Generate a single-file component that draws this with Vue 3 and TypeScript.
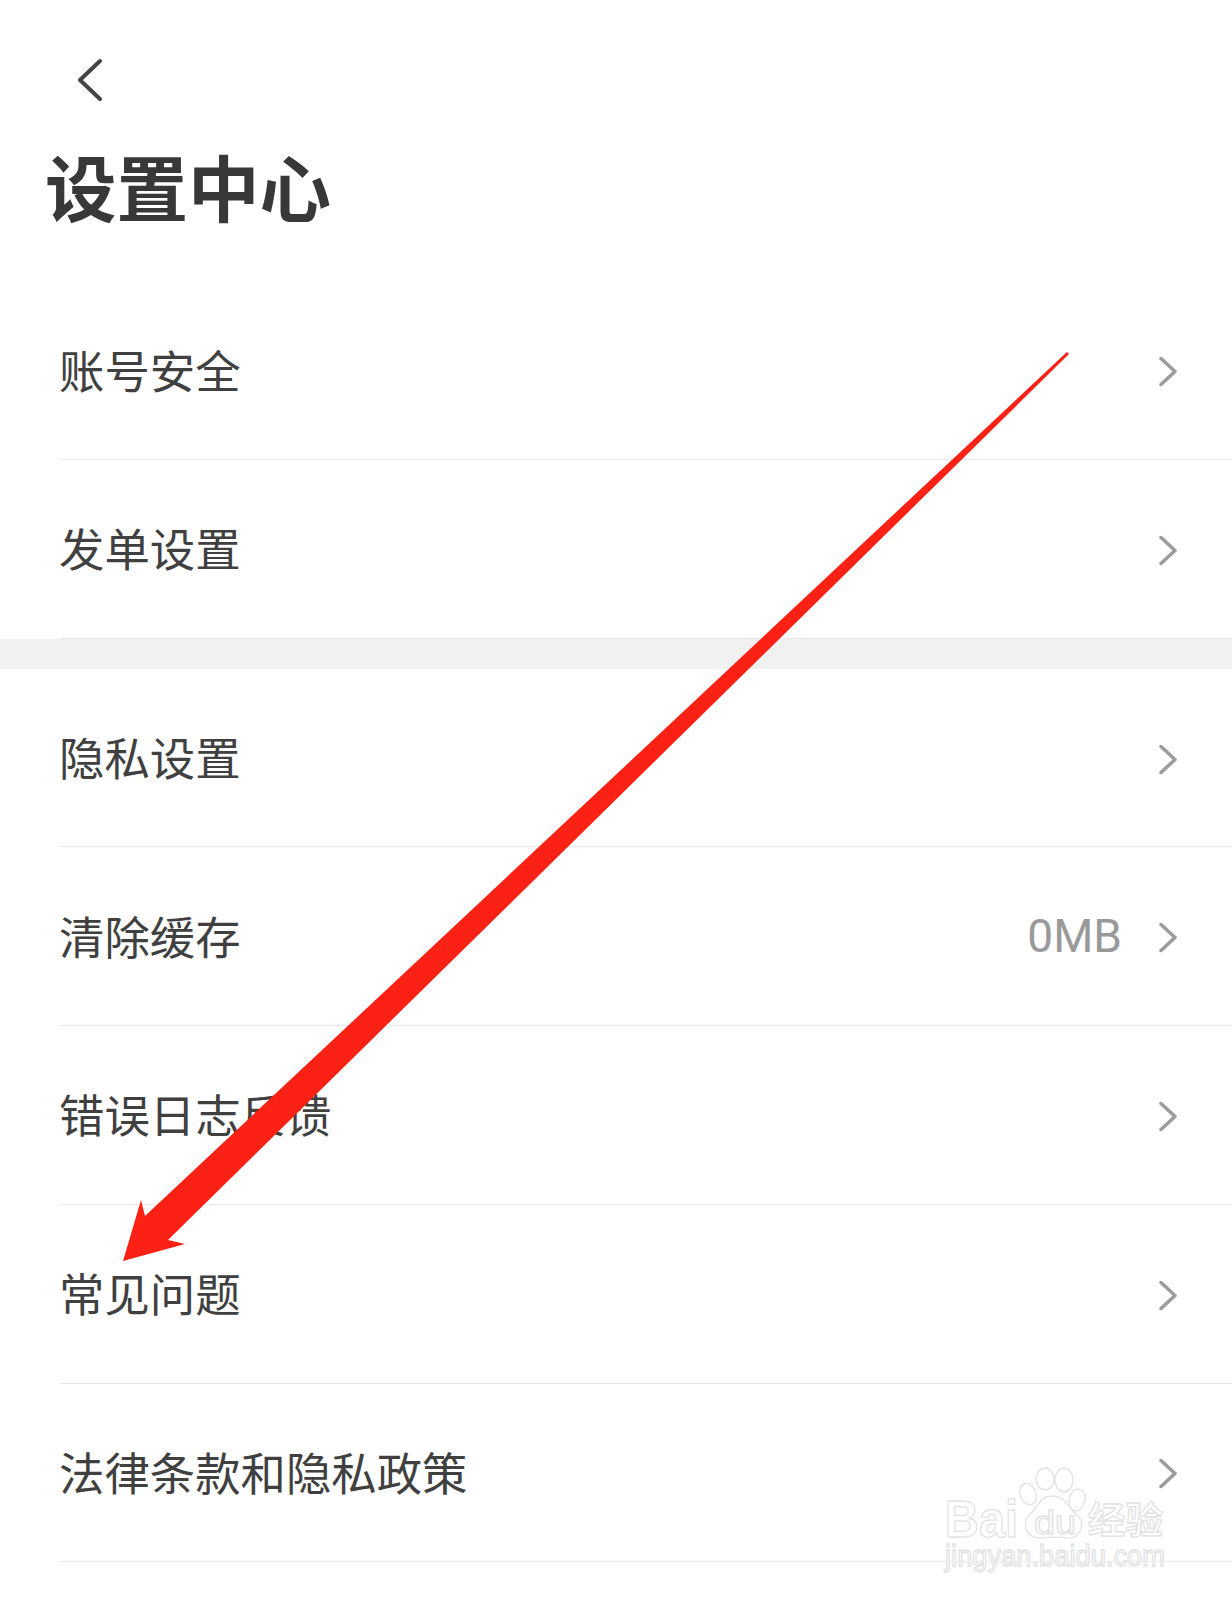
<script setup lang="ts">
interface Row {
  label: string;
  value?: string;
}

const accountRows: Row[] = [{ label: "账号安全" }, { label: "发单设置" }];
const generalRows: Row[] = [
  { label: "隐私设置" },
  { label: "清除缓存", value: "0MB" },
  { label: "错误日志反馈" },
  { label: "常见问题" },
  { label: "法律条款和隐私政策" },
];
const sections: Row[][] = [accountRows, generalRows];
</script>

<template>
  <div class="page" lang="zh-CN">
    <header class="header">
      <svg class="back" width="28" height="44" viewBox="0 0 28 44" aria-hidden="true">
        <path d="M24 3 L4 22 L24 41" />
      </svg>
      <h1 class="title">设置中心</h1>
    </header>

    <template v-for="(rows, index) in sections" :key="index">
      <div v-if="index > 0" class="band"></div>
      <section class="section">
        <div v-for="row in rows" :key="row.label" class="row">
          <span class="label">{{ row.label }}</span>
          <span class="trail">
            <span v-if="row.value" class="value">{{ row.value }}</span>
            <svg class="chevron" width="19" height="31" viewBox="0 0 19 31" aria-hidden="true">
              <path d="M3 2.5 L17 15.5 L3 28.5" />
            </svg>
          </span>
        </div>
      </section>
    </template>

    <svg class="overlay" width="1232" height="1600" viewBox="0 0 1232 1600" aria-hidden="true">
      <g class="watermark">
        <ellipse cx="1028" cy="1494" rx="8" ry="11" transform="rotate(-20 1028 1494)" />
        <ellipse cx="1045" cy="1479" rx="9" ry="11" />
        <ellipse cx="1064" cy="1480" rx="9" ry="12" />
        <ellipse cx="1077" cy="1500" rx="8" ry="11" transform="rotate(15 1077 1500)" />
        <path d="M1052 1496 C1040 1496 1038 1508 1030 1514 C1022 1520 1024 1538 1040 1538 C1048 1538 1056 1536 1066 1538 C1080 1540 1086 1524 1078 1516 C1068 1508 1066 1496 1052 1496 Z" />
        <text class="wm-big" x="945" y="1537" textLength="73" lengthAdjust="spacingAndGlyphs">Bai</text>
        <text class="wm-du" x="1034" y="1534" textLength="42" lengthAdjust="spacingAndGlyphs">du</text>
        <text class="wm-cn" x="1088" y="1534" textLength="75" lengthAdjust="spacingAndGlyphs">经验</text>
        <text class="wm-url" x="945" y="1566" textLength="220" lengthAdjust="spacingAndGlyphs">jingyan.baidu.com</text>
      </g>
      <polygon
        class="arrow"
        points="1067,352 1069,354 168,1240 185,1244 123,1261 141,1200 145,1216"
      />
    </svg>
  </div>
</template>

<style>
html,
body {
  background: #ffffff;
}
</style>

<style scoped>
.page {
  position: relative;
  width: 1232px;
  height: 1600px;
  overflow: hidden;
  background: #ffffff;
  font-family: "Noto Sans CJK SC", "Liberation Sans", sans-serif;
}

.header {
  display: flex;
  flex-direction: column;
  align-items: flex-start;
  height: 281.4px;
  box-sizing: border-box;
  padding: 58px 0 0 76px;
}

.back {
  display: block;
}

.back path {
  fill: none;
  stroke: #444444;
  stroke-width: 4;
  stroke-linecap: round;
  stroke-linejoin: round;
}

.title {
  margin: 39px 0 0 -31px;
  font-size: 71.5px;
  line-height: 88px;
  font-weight: 700;
  color: #383838;
}

.band {
  height: 30px;
  background: #f1f1f1;
}

.section {
  padding-left: 60px;
}

.row {
  display: flex;
  align-items: center;
  justify-content: space-between;
  height: 178.7px;
  box-sizing: border-box;
  padding-right: 55px;
  border-bottom: 1px solid #e9e9e9;
}

.label {
  margin-left: -1px;
  padding-bottom: 3px;
  font-size: 45.4px;
  line-height: 60px;
  font-weight: 400;
  color: #404040;
}

.trail {
  display: flex;
  align-items: center;
  gap: 36px;
}

.value {
  font-family: "Roboto", "Liberation Sans", sans-serif;
  font-size: 46px;
  line-height: 60px;
  color: #999999;
}

.chevron {
  display: block;
  margin-top: 3px;
}

.chevron path {
  fill: none;
  stroke: #9c9c9c;
  stroke-width: 3.5;
  stroke-linecap: round;
  stroke-linejoin: round;
}

.overlay {
  position: absolute;
  top: 0;
  left: 0;
  pointer-events: none;
}

.arrow {
  fill: #fb2114;
}

.watermark ellipse,
.watermark path,
.watermark text {
  fill: #ffffff;
  stroke: #e2e2e2;
  stroke-width: 1.3;
}

.watermark text {
  font-family: "Liberation Sans", "Noto Sans CJK SC", sans-serif;
}

.wm-big {
  font-size: 52px;
  font-weight: 700;
}

.wm-du {
  font-size: 34px;
}

.wm-cn {
  font-size: 37px;
  font-weight: 700;
}

.wm-url {
  font-size: 29px;
}
</style>
